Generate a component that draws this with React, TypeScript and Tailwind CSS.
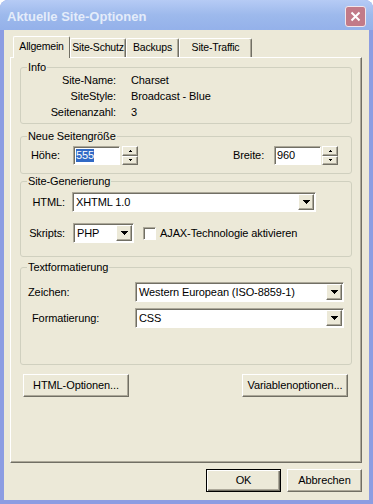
import React from "react";

const raised =
  "bg-[#ece9d8] border border-t-white border-l-white border-r-[#716f64] border-b-[#716f64] shadow-[inset_-1px_-1px_0_#aca899]";
const sunken =
  "bg-white border border-t-[#aca899] border-l-[#aca899] border-r-white border-b-white shadow-[inset_1px_1px_0_#716f64]";

const DownArrow = () => (
  <svg width="7" height="4" viewBox="0 0 7 4" shapeRendering="crispEdges">
    <path d="M0 0H7V1H6V2H5V3H4V4H3V3H2V2H1V1H0Z" fill="#000" />
  </svg>
);

const Select = ({ value, className }: { value: string; className: string }) => (
  <div className={`${sunken} flex h-[20px] p-px ${className}`}>
    <div className="flex-1 pl-[2px] leading-[16px] whitespace-nowrap overflow-hidden">{value}</div>
    <div className={`${raised} w-[16px] flex items-center justify-center`}>
      <DownArrow />
    </div>
  </div>
);

const Spin = ({ className = "" }: { className?: string }) => (
  <div className={`flex flex-col w-[16px] h-[19px] ${className}`}>
    <div className={`${raised} flex-1 flex items-center justify-center`}>
      <svg width="3" height="2" viewBox="0 0 3 2" shapeRendering="crispEdges">
        <path d="M1 0H2V1H3V2H0V1H1Z" fill="#000" />
      </svg>
    </div>
    <div className={`${raised} flex-1 flex items-center justify-center`}>
      <svg width="3" height="2" viewBox="0 0 3 2" shapeRendering="crispEdges">
        <path d="M0 0H3V1H2V2H1V1H0Z" fill="#000" />
      </svg>
    </div>
  </div>
);

const Group = ({ title, className, children }: { title: string; className: string; children: React.ReactNode }) => (
  <fieldset className={`mx-[9px] border border-[#d0d0bf] rounded-[3px] ${className}`}>
    <legend className="ml-[6px] px-px leading-[12px]">{title}</legend>
    {children}
  </fieldset>
);

export default function App() {
  const info = [
    ["Site-Name:", "Charset"],
    ["SiteStyle:", "Broadcast - Blue"],
    ["Seitenanzahl:", "3"],
  ];

  return (
    <div className="w-[373px] h-[504px] flex flex-col bg-[#8c9de2] rounded-t-[8px] overflow-hidden font-[family-name:Liberation_Sans,Arial,sans-serif] text-[11px] tracking-[-0.1px] whitespace-nowrap text-black">
      {/* title bar */}
      <div className="h-[30px] flex items-center pt-[3px] pl-[7px] pr-[7px] bg-gradient-to-b from-[#b6cbf5] via-[#9db9ec] to-[#94b1ea]">
        <span className="font-bold text-[13px] tracking-normal text-[#e4ecfa]">Aktuelle Site-Optionen</span>
        <div className="ml-auto w-[21px] h-[21px] rounded-[3px] border border-[#f2e6ea] bg-[#c27a88] flex items-center justify-center">
          <svg width="11" height="11" viewBox="0 0 11 11">
            <path d="M1.5 1.5L9.5 9.5M9.5 1.5L1.5 9.5" stroke="#fff" strokeWidth="2" />
          </svg>
        </div>
      </div>

      {/* body */}
      <div className="flex-1 mx-[4px] mb-[4px] bg-[#ece9d8] flex flex-col">
        <div className="ml-[6px] w-[352px] mt-[6px]">
          {/* tabs */}
          <div className="flex items-end h-[21px] pl-[3px] text-[10.5px] tracking-[-0.2px]">
            <div className="relative z-10 -mb-px h-[22px] w-[57px] bg-[#ece9d8] border-l border-t border-r border-l-white border-t-white border-r-[#716f64] rounded-t-[2px] flex items-center justify-center pb-[2px]">
              Allgemein
            </div>
            {[
              ["Site-Schutz", "w-[56px]"],
              ["Backups", "w-[53px]"],
              ["Site-Traffic", "w-[73px]"],
            ].map(([t, w]) => (
              <div
                key={t}
                className={`h-[19px] ${w} border-l border-t border-r border-l-white border-t-white border-r-[#716f64] rounded-t-[2px] shadow-[inset_-1px_0_0_#aca899] flex items-center justify-center`}
              >
                {t}
              </div>
            ))}
          </div>

          {/* panel */}
          <div className="h-[406px] border border-t-white border-l-white border-r-[#716f64] border-b-[#716f64] shadow-[inset_-1px_-1px_0_#aca899] flex flex-col">
            <Group title="Info" className="mt-[3px] h-[63px]">
              <div className="-mt-px">
                {info.map(([k, v]) => (
                  <div key={k} className="flex leading-[16px]">
                    <span className="w-[95px] text-right">{k}</span>
                    <span className="ml-[15px]">{v}</span>
                  </div>
                ))}
              </div>
            </Group>

            <Group title="Neue Seitengröße" className="mt-[6px] h-[44px]">
              <div className="flex items-center mt-[4px] pl-[10px]">
                <span className="w-[42px]">Höhe:</span>
                <div className={`${sunken} w-[47px] h-[19px] pl-[2px] flex items-center`}>
                  <span className="bg-[#316ac5] text-white leading-[13px]">555</span>
                </div>
                <Spin className="ml-[2px]" />
                <span className="ml-[95px] w-[41px]">Breite:</span>
                <div className={`${sunken} w-[47px] h-[19px] pl-[2px] flex items-center`}>960</div>
                <Spin className="ml-px" />
              </div>
            </Group>

            <Group title="Site-Generierung" className="mt-px h-[82px]">
              <div className="flex items-center mt-[5px]">
                <span className="w-[44px] text-right">HTML:</span>
                <Select className="ml-[7px] w-[244px]" value="XHTML 1.0" />
              </div>
              <div className="flex items-center mt-[11px]">
                <span className="w-[44px] text-right">Skripts:</span>
                <Select className="ml-[8px] w-[61px]" value="PHP" />
                <div className={`${sunken} w-[13px] h-[13px] ml-[9px]`} />
                <span className="ml-[4px]">AJAX-Technologie aktivieren</span>
              </div>
            </Group>

            <Group title="Textformatierung" className="mt-[4px] h-[104px]">
              <div className="flex items-center mt-[9px] pl-[7px]">
                <span className="w-[107px]">Zeichen:</span>
                <Select className="w-[209px]" value="Western European (ISO-8859-1)" />
              </div>
              <div className="flex items-center mt-[6px] pl-[11px]">
                <span className="w-[103px]">Formatierung:</span>
                <Select className="w-[209px]" value="CSS" />
              </div>
            </Group>

            <div className="flex justify-between ml-[12px] mr-[13px] mt-[9px]">
              <div className={`${raised} w-[106px] h-[23px] flex items-center justify-center`}>HTML-Optionen...</div>
              <div className={`${raised} w-[106px] h-[23px] flex items-center justify-center`}>Variablenoptionen...</div>
            </div>
          </div>

          {/* dialog buttons */}
          <div className="flex justify-end gap-[6px] mt-[6px]">
            <div className="w-[75px] h-[23px] bg-[#ece9d8] border border-black shadow-[inset_1px_1px_0_#fff,inset_-1px_-1px_0_#716f64,inset_-2px_-2px_0_#aca899] flex items-center justify-center">
              OK
            </div>
            <div className={`${raised} w-[75px] h-[23px] flex items-center justify-center`}>Abbrechen</div>
          </div>
        </div>
      </div>
    </div>
  );
}
